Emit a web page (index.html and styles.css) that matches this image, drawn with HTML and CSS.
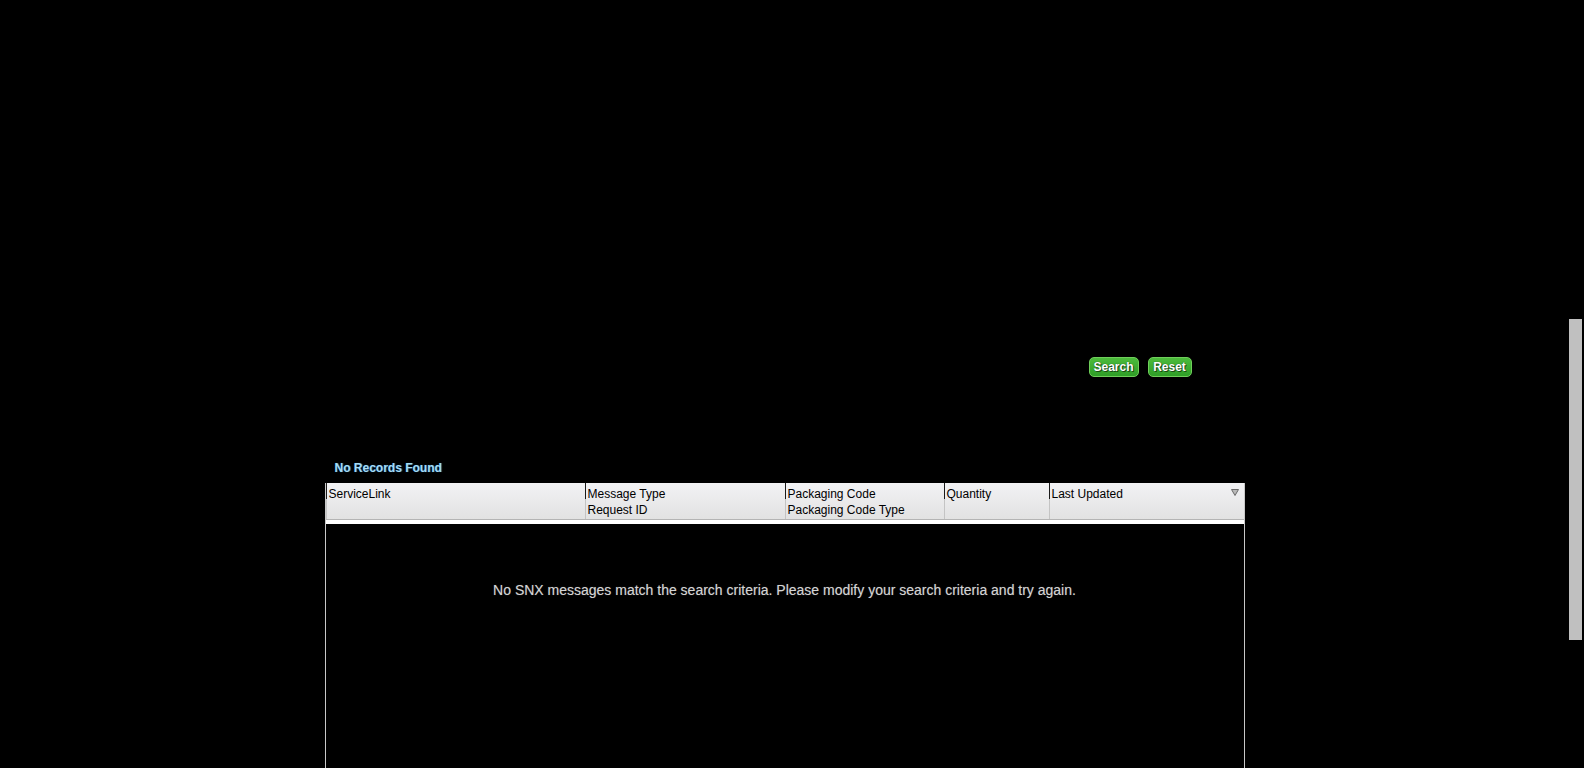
FILE: index.html
```html
<!DOCTYPE html>
<html>
<head>
<meta charset="utf-8">
<link rel="stylesheet" href="styles.css">
</head>
<body>
<div class="page">
  <div class="actions">
    <button class="btn btn-search">Search</button>
    <button class="btn btn-reset">Reset</button>
  </div>
  <div class="results">
    <div class="title">No Records Found</div>
    <div class="grid">
      <div class="head">
        <div class="col c1"><span class="r1">ServiceLink</span><span class="r2">&nbsp;</span></div>
        <div class="col c2"><span class="r1">Message Type</span><span class="r2">Request ID</span></div>
        <div class="col c3"><span class="r1">Packaging Code</span><span class="r2">Packaging Code Type</span></div>
        <div class="col c4"><span class="r1">Quantity</span><span class="r2">&nbsp;</span></div>
        <div class="col c5"><span class="r1">Last Updated</span><span class="r2">&nbsp;</span>
          <svg class="sort" width="8" height="7" viewBox="0 0 8 7"><path d="M0.5 0.5 H7.5 L4 6.5 Z" fill="#b8b8b8" stroke="#6a6a6a" stroke-width="1"/></svg>
        </div>
      </div>
      <div class="gap"></div>
      <div class="body">
        <p class="empty">No SNX messages match the search criteria. Please modify your search criteria and try again.</p>
      </div>
    </div>
  </div>
</div>
<div class="scrollthumb"></div>
</body>
</html>
```
FILE: styles.css
```css
html, body {
  margin: 0;
  padding: 0;
  background: #000;
  height: 100%;
  overflow: hidden;
}
body {
  font-family: "Liberation Sans", Arial, sans-serif;
}
.page {
  width: 1569px;
  height: 768px;
  display: flex;
  flex-direction: column;
  align-items: center;
}
.actions {
  width: 920px;
  display: flex;
  justify-content: flex-end;
  gap: 9px;
  padding-top: 357px;
  padding-right: 53px;
  box-sizing: border-box;
}
.btn {
  height: 20px;
  margin: 0;
  padding: 0 3px;
  border: 1px solid #6fcf5a;
  border-radius: 5px;
  background: linear-gradient(#4cbb3c, #2f9e27);
  color: #fff;
  font-family: "Liberation Sans", Arial, sans-serif;
  font-size: 12px;
  font-weight: bold;
  line-height: 18px;
  text-shadow: 0 0 1px #103d10, 1px 1px 0 #1b4d17;
}
.btn-search { width: 50px; }
.btn-reset { width: 44px; }
.results {
  width: 920px;
  margin-top: 84px;
  flex: 1;
  display: flex;
  flex-direction: column;
}
.title {
  padding-left: 10px;
  font-size: 12px;
  font-weight: bold;
  color: #a6dcf5;
  line-height: 14px;
  height: 22px;
  text-shadow: 0 0 1px #0b3a66, 1px 0 0 #124a7a;
}
.grid {
  flex: 1;
  display: flex;
  flex-direction: column;
  border-left: 1px solid #c8c8c8;
  border-right: 1px solid #c8c8c8;
}
.head {
  display: flex;
  height: 36px;
  background: linear-gradient(#f2f2f4, #e2e2e2);
  border-bottom: 1px solid #b4b4b4;
}
.col {
  position: relative;
  display: flex;
  flex-direction: column;
  padding: 3px 0 0 2px;
  font-size: 12px;
  line-height: 16px;
  color: #000;
  border-left: 1px solid #c4c4c4;
  box-sizing: border-box;
}
.col::before {
  content: "";
  position: absolute;
  left: -1px;
  top: 0;
  width: 1px;
  height: 16px;
  background: #1a1a1a;
}
.c1 { width: 259px; }
.c2 { width: 200px; }
.c3 { width: 159px; }
.c4 { width: 105px; }
.c5 { flex: 1; }
.sort {
  position: absolute;
  right: 5px;
  top: 6px;
}
.gap {
  height: 4px;
  background: #fff;
}
.body {
  flex: 1;
  background: #000;
}
.empty {
  margin: 58px 0 0;
  text-align: center;
  font-size: 14px;
  line-height: 16px;
  color: #d4d4d4;
  text-shadow: 0 0 1px #555;
}
.scrollthumb {
  position: fixed;
  left: 1569px;
  top: 319px;
  width: 13px;
  height: 321px;
  background: #c0c0c0;
}
```
